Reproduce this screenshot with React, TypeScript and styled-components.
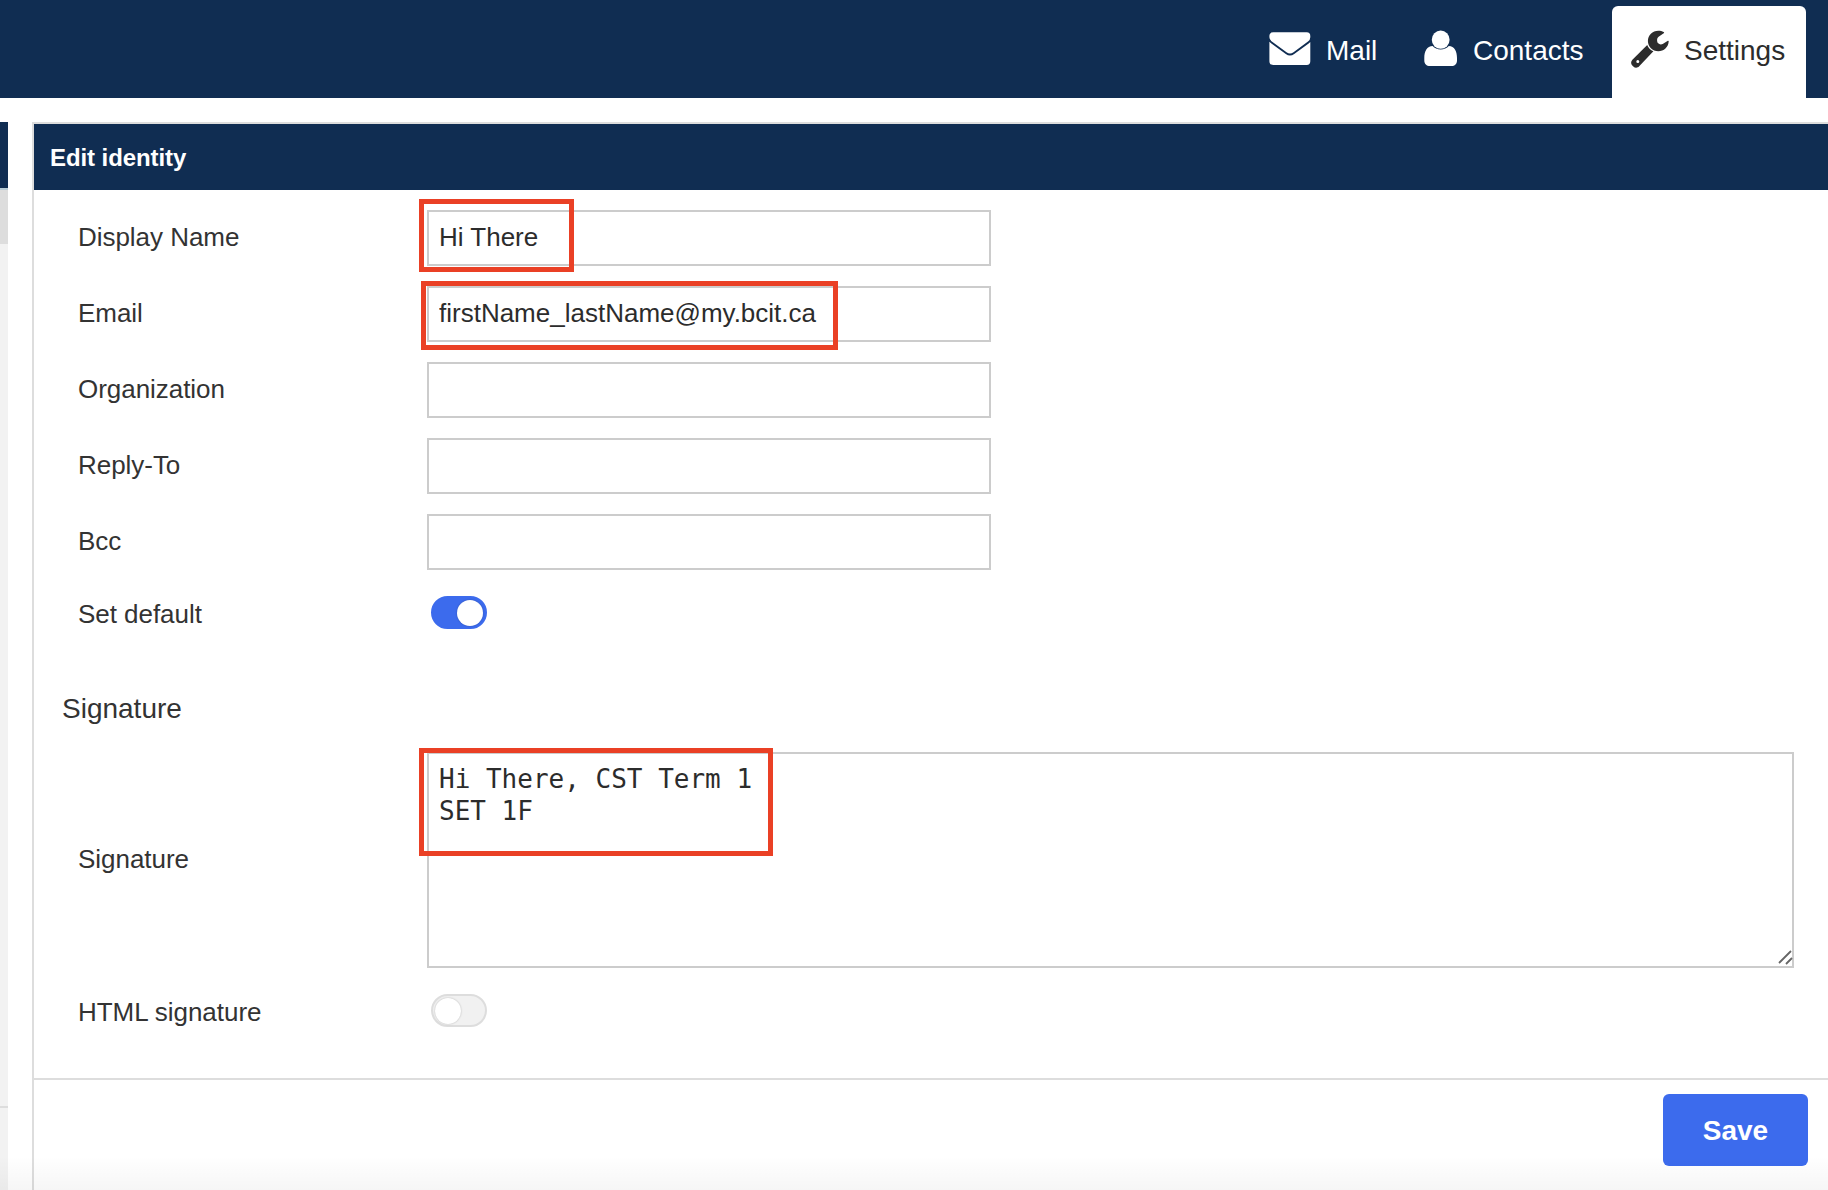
import React from "react";
import styled, { createGlobalStyle, css } from "styled-components";

const navy = "#102d52";
const blue = "#3c6bed";
const line = "#dddddd";
const ink = "#2c2c2c";

const GlobalStyle = createGlobalStyle`
  * { box-sizing: border-box; }
  html, body { margin: 0; padding: 0; }
  body {
    background: #fff;
    color: ${ink};
    font-family: "Liberation Sans", Arial, Helvetica, sans-serif;
    overflow: hidden;
  }
`;

const Page = styled.div`
  position: relative;
  width: 1828px;
  height: 1190px;
  display: flex;
  flex-direction: column;
  overflow: hidden;
`;

const TaskBar = styled.header`
  flex: none;
  height: 98px;
  padding: 6px 22px 0 0;
  display: flex;
  justify-content: flex-end;
  background: ${navy};
`;

const TaskButton = styled.a<{ $active?: boolean; $width: number }>`
  width: ${(p) => p.$width}px;
  height: 92px;
  padding: 0 0 6px 19px;
  display: flex;
  align-items: center;
  gap: 15px;
  border-radius: 6px 6px 0 0;
  color: #fff;
  font-size: 28px;
  line-height: 32px;
  white-space: nowrap;
  ${(p) =>
    p.$active &&
    css`
      background: #fff;
      color: ${ink};
    `}
`;

const TaskLabel = styled.span`
  padding-top: 3px;
`;

const TaskIcon = styled.svg`
  flex: none;
  display: block;
  height: 40px;
`;

const Workspace = styled.main`
  flex: 1;
  min-height: 0;
  padding-top: 24px;
  display: flex;
  gap: 24px;
`;

const Sidebar = styled.aside`
  width: 8px;
  display: flex;
  flex-direction: column;
  background: #f2f2f2;
`;

const SidebarHead = styled.div`
  height: 68px;
  background: ${navy};
  border-bottom: 2px solid #b9ccd6;
`;

const SidebarSelected = styled.div`
  height: 54px;
  background: ${line};
`;

const SidebarFooter = styled.div`
  margin-top: auto;
  height: 84px;
  border-top: 2px solid ${line};
`;

const Panel = styled.section`
  flex: 1;
  display: flex;
  flex-direction: column;
  border-top: 2px solid ${line};
  border-left: 2px solid ${line};
`;

const PanelTitle = styled.h2`
  flex: none;
  margin: 0;
  height: 66px;
  padding: 0 0 0 16px;
  background: ${navy};
  color: #fff;
  font-size: 24px;
  font-weight: 700;
  line-height: 67px;
  letter-spacing: -0.08px;
`;

const Form = styled.form`
  flex: 1;
  padding: 20px 34px 0 44px;
  display: flex;
  flex-direction: column;
`;

const Row = styled.div<{ $height?: number; $after?: number }>`
  display: grid;
  grid-template-columns: 349px 1fr;
  align-items: center;
  height: ${(p) => p.$height ?? 56}px;
  margin-bottom: ${(p) => p.$after ?? 20}px;
`;

const Label = styled.label<{ $lowered?: boolean }>`
  font-size: 26px;
  line-height: 30px;
  letter-spacing: -0.04px;
  color: #333;
  white-space: nowrap;
  padding: ${(p) => (p.$lowered ? "2px 0 0" : "0 0 3px")};
`;

const Field = styled.div`
  position: relative;
  display: flex;
`;

const TextInput = styled.input`
  width: 564px;
  height: 56px;
  padding: 0 10px 1px;
  border: 2px solid #ccc;
  border-radius: 0;
  background: #fff;
  color: ${ink};
  font: 26px/30px "Liberation Sans", Arial, sans-serif;
  outline: none;
`;

const SignatureInput = styled.textarea`
  display: block;
  width: 100%;
  height: 216px;
  padding: 9px 10px;
  border: 2px solid #ccc;
  border-radius: 0;
  background: #fff;
  color: ${ink};
  font: 26px/32px "DejaVu Sans Mono", Menlo, monospace;
  resize: none;
  outline: none;
  overflow: hidden;
`;

const ResizeGrip = styled.svg`
  position: absolute;
  right: 1px;
  bottom: 3px;
  width: 16px;
  height: 16px;
`;

const Highlight = styled.div<{ $x: number; $y: number; $w: number; $h: number }>`
  position: absolute;
  left: ${(p) => p.$x}px;
  top: ${(p) => p.$y}px;
  width: ${(p) => p.$w}px;
  height: ${(p) => p.$h}px;
  border: 5px solid #ea4025;
  pointer-events: none;
`;

const SectionTitle = styled.h3`
  margin: 0 0 27px -16px;
  font-size: 28px;
  font-weight: 400;
  line-height: 32px;
  color: #333;
`;

const Switch = styled.span<{ $on?: boolean }>`
  width: 56px;
  height: 33px;
  margin-left: 4px;
  padding: 0 2px;
  display: flex;
  align-items: center;
  justify-content: ${(p) => (p.$on ? "flex-end" : "flex-start")};
  border: 2px solid ${(p) => (p.$on ? blue : line)};
  border-radius: 17px;
  background: ${(p) => (p.$on ? blue : "#f1f1f1")};
`;

const Knob = styled.span`
  width: 26px;
  height: 26px;
  border-radius: 50%;
  background: #fff;
  box-shadow: 0 0 2px rgba(0, 0, 0, 0.25);
`;

const ButtonBar = styled.footer`
  flex: none;
  height: 112px;
  padding: 14px 20px 0;
  border-top: 2px solid ${line};
  display: flex;
  justify-content: flex-end;
`;

const SaveButton = styled.button`
  width: 145px;
  height: 72px;
  padding: 2px 0 0;
  border: 0;
  border-radius: 6px;
  background: ${blue};
  color: #fff;
  font: 700 28px/32px "Liberation Sans", Arial, sans-serif;
`;

const BottomFade = styled.div`
  position: absolute;
  left: 0;
  right: 0;
  bottom: 0;
  height: 34px;
  background: linear-gradient(to bottom, rgba(0, 0, 0, 0), rgba(0, 0, 0, 0.035));
  pointer-events: none;
`;

const MailIcon = () => (
  <TaskIcon width="42" height="40" viewBox="0 0 42 40" fill="currentColor">
    <path d="M4.3 3.3H37.7Q41.3 3.3 41.3 6.9V8.2Q41.3 10.7 39 12.500L24.500 23.200Q21 25.800 17.500 23.200L2.500 12.200Q0.400 10.600 0.400 8.200V6.900Q0.400 3.300 4.300 3.300Z" />
    <path d="M0.4 12.8Q1 13.400 1.700 13.900L16.800 24.900Q21 28 25.200 24.900L40 14.200Q40.800 13.600 41.300 13V32.200Q41.300 35.900 37.700 35.900H4.200Q0.400 35.900 0.400 32.200Z" />
  </TaskIcon>
);

const UserIcon = () => (
  <TaskIcon width="34" height="40" viewBox="0 0 34 40" fill="currentColor">
    <ellipse cx="16.7" cy="10.7" rx="8.9" ry="9.1" />
    <path d="M8.6 17.100C3 17.100 0.300 22.200 0.300 29V31.500C0.300 35 2.500 37 6 37H27.400C30.900 37 33 35 33 31.500V29C33 22.200 30.400 17.100 24.800 17.100C22.800 19.400 20.100 20.500 16.700 20.500C13.300 20.500 10.600 19.400 8.600 17.100Z" />
  </TaskIcon>
);

const WrenchIcon = () => (
  <TaskIcon width="38" height="40" viewBox="0 0 38 40">
    <path
      fill="currentColor"
      fillRule="evenodd"
      d="M16.200 16C17.300 18.900 19.500 21.100 22.400 22.200L8.200 37.300C6.500 39.200 4 39.200 2.300 37.500L1.300 36.500C-0.300 34.800 -0.300 32.500 1.400 30.800ZM6.800 30.900A1.500 1.500 0 1 0 6.800 33.900A1.500 1.500 0 1 0 6.800 30.900Z"
    />
    <path
      fill="currentColor"
      d="M32.600 2.900C33.300 3.300 33.300 3.900 32.700 4.300L27.600 7.700Q26.100 8.800 26.100 10.600V12Q26.200 13.900 27.900 14.800Q29.800 15.900 31.700 14.900L36.500 11.900C37.300 11.400 37.800 11.700 37.700 12.600C37.300 18.300 32.900 22.300 27.300 22.300C21.500 22.300 16.900 17.800 16.900 12C16.900 6.200 21.500 1.700 27.300 1.700C29.400 1.700 31.100 2.100 32.600 2.900Z"
    />
  </TaskIcon>
);

const contactFields = [
  { label: "Display Name", value: "Hi There", mark: { $x: -8, $y: -11, $w: 155, $h: 73 } },
  { label: "Email", value: "firstName_lastName@my.bcit.ca", mark: { $x: -6, $y: -5, $w: 417, $h: 69 } },
  { label: "Organization", value: "" },
  { label: "Reply-To", value: "" },
  { label: "Bcc", value: "" },
];

export default function App() {
  return (
    <Page>
      <GlobalStyle />
      <TaskBar>
        <TaskButton $width={155}>
          <MailIcon />
          <TaskLabel>Mail</TaskLabel>
        </TaskButton>
        <TaskButton $width={207}>
          <UserIcon />
          <TaskLabel>Contacts</TaskLabel>
        </TaskButton>
        <TaskButton $active $width={194}>
          <WrenchIcon />
          <TaskLabel>Settings</TaskLabel>
        </TaskButton>
      </TaskBar>
      <Workspace>
        <Sidebar>
          <SidebarHead />
          <SidebarSelected />
          <SidebarFooter />
        </Sidebar>
        <Panel>
          <PanelTitle>Edit identity</PanelTitle>
          <Form>
            {contactFields.map((f) => (
              <Row key={f.label}>
                <Label>{f.label}</Label>
                <Field>
                  <TextInput type="text" defaultValue={f.value} spellCheck={false} />
                  {f.mark && <Highlight {...f.mark} />}
                </Field>
              </Row>
            ))}
            <Row $height={45} $after={58}>
              <Label $lowered>Set default</Label>
              <Switch $on>
                <Knob />
              </Switch>
            </Row>
            <SectionTitle>Signature</SectionTitle>
            <Row $height={216} $after={18}>
              <Label>Signature</Label>
              <Field>
                <SignatureInput defaultValue={"Hi There, CST Term 1\nSET 1F"} spellCheck={false} />
                <ResizeGrip viewBox="0 0 16 16" stroke="#666" strokeWidth="1.8" fill="none">
                  <path d="M2 14L14 2M9 15L15 9" />
                </ResizeGrip>
                <Highlight $x={-8} $y={-4} $w={354} $h={108} />
              </Field>
            </Row>
            <Row $height={49} $after={0}>
              <Label $lowered>HTML signature</Label>
              <Switch>
                <Knob />
              </Switch>
            </Row>
          </Form>
          <ButtonBar>
            <SaveButton type="button">Save</SaveButton>
          </ButtonBar>
        </Panel>
      </Workspace>
      <BottomFade />
    </Page>
  );
}
